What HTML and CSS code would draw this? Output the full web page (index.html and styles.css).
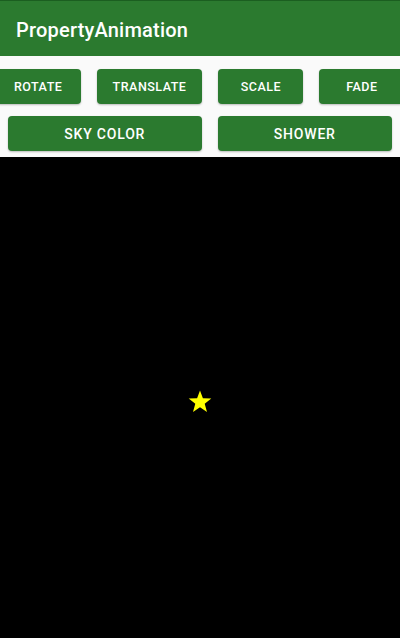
FILE: index.html
```html
<!DOCTYPE html>
<html>
<head>
<meta charset="utf-8">
<link rel="stylesheet" href="styles.css">
</head>
<body>
<div class="screen">
  <div class="statusline"></div>
  <header class="appbar"><h1 class="title">PropertyAnimation</h1></header>
  <div class="controls">
    <div class="row row-top">
      <button class="btn">Rotate</button>
      <button class="btn">Translate</button>
      <button class="btn">Scale</button>
      <button class="btn">Fade</button>
    </div>
    <div class="row row-bottom">
      <button class="btn btn-grow">Sky Color</button>
      <button class="btn btn-grow">Shower</button>
    </div>
  </div>
  <main class="sky">
    <svg class="star" width="24" height="23" viewBox="0 0 24 23">
      <polygon points="12,0.5 14.9,8.3 23.3,8.6 16.7,13.8 19,21.9 12,17.2 5,21.9 7.3,13.8 0.7,8.6 9.1,8.3" fill="#ffff00"/>
    </svg>
  </main>
</div>
</body>
</html>
```
FILE: styles.css
```css
html, body {
  margin: 0;
  padding: 0;
  background: #000;
}
.screen {
  width: 400px;
  height: 638px;
  display: flex;
  flex-direction: column;
  overflow: hidden;
  font-family: Roboto, "Liberation Sans", sans-serif;
}
.statusline {
  height: 1px;
  background: #1b5e20;
}
.appbar {
  height: 55px;
  background: #2b7a2f;
  display: flex;
  align-items: center;
  padding-left: 16px;
}
.title {
  margin: 0;
  color: #fff;
  font-size: 20px;
  font-weight: 500;
  letter-spacing: 0.2px;
  line-height: 1;
  padding-top: 2px;
}
.controls {
  background: #fafafa;
  padding: 13px 0 6px;
  display: flex;
  flex-direction: column;
  gap: 12px;
}
.row {
  display: flex;
  gap: 16px;
}
.row-top {
  justify-content: center;
}
.row-bottom {
  padding: 0 8px;
}
.btn {
  flex: 0 0 auto;
  min-width: 85px;
  height: 35px;
  padding: 0 16px;
  border: none;
  border-radius: 4px;
  background: #2b7a2f;
  color: #fff;
  font-family: Roboto, "Liberation Sans", sans-serif;
  font-size: 12.5px;
  font-weight: 500;
  letter-spacing: 0.5px;
  text-transform: uppercase;
  box-shadow: 0 1px 2px rgba(0,0,0,0.25);
}
.btn-grow {
  flex: 1 1 auto;
  font-size: 14px;
  letter-spacing: 0.8px;
}
.sky {
  flex: 1;
  background: #000;
  display: flex;
  align-items: center;
  justify-content: center;
}
.star {
  display: block;
  margin-top: 7px;
}
```
